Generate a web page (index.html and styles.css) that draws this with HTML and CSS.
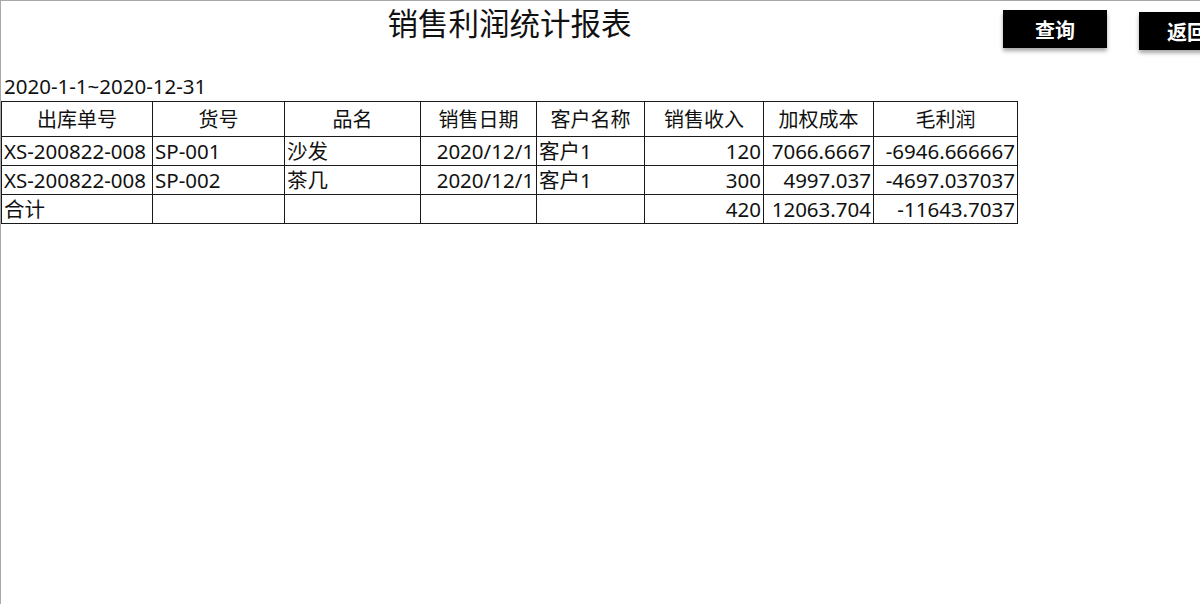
FILE: index.html
```html
<!DOCTYPE html>
<html lang="zh-CN">
<head>
<meta charset="utf-8">
<title>销售利润统计报表</title>
<link rel="stylesheet" href="styles.css">
</head>
<body>
<div class="page">
  <div class="header">
    <h1 class="title">销售利润统计报表</h1>
    <div class="actions">
      <button class="btn">查询</button>
      <button class="btn btn-back">返回</button>
    </div>
  </div>
  <div class="range">2020-1-1~2020-12-31</div>
  <table class="report">
    <colgroup>
      <col class="c1"><col class="c2"><col class="c3"><col class="c4">
      <col class="c5"><col class="c6"><col class="c7"><col class="c8">
    </colgroup>
    <thead>
      <tr>
        <th>出库单号</th><th>货号</th><th>品名</th><th>销售日期</th>
        <th>客户名称</th><th>销售收入</th><th>加权成本</th><th>毛利润</th>
      </tr>
    </thead>
    <tbody>
      <tr>
        <td>XS-200822-008</td><td>SP-001</td><td>沙发</td><td class="r">2020/12/1</td>
        <td>客户1</td><td class="r">120</td><td class="r">7066.6667</td><td class="r">-6946.666667</td>
      </tr>
      <tr>
        <td>XS-200822-008</td><td>SP-002</td><td>茶几</td><td class="r">2020/12/1</td>
        <td>客户1</td><td class="r">300</td><td class="r">4997.037</td><td class="r">-4697.037037</td>
      </tr>
      <tr>
        <td>合计</td><td></td><td></td><td></td>
        <td></td><td class="r">420</td><td class="r">12063.704</td><td class="r">-11643.7037</td>
      </tr>
    </tbody>
  </table>
</div>
</body>
</html>
```

FILE: styles.css
```css
html, body {
  margin: 0;
  padding: 0;
  background: #fff;
}

body {
  font-family: "Noto Sans", "Noto Sans CJK SC", sans-serif;
  color: #111;
}

.page {
  box-sizing: border-box;
  height: 604px;
  border-top: 1px solid #a8a8a8;
  border-left: 1px solid #a8a8a8;
  overflow: hidden;
}

.header {
  display: flex;
  height: 70px;
}

.title {
  flex: 0 0 1002px;
  box-sizing: border-box;
  margin: 0;
  padding: 1px 0 0 15px;
  text-align: center;
  font-family: "Noto Sans CJK SC", sans-serif;
  font-size: 30.5px;
  font-weight: 400;
  line-height: 40px;
  color: #111;
}

.actions {
  display: flex;
  align-items: flex-start;
  gap: 32px;
  padding-top: 9px;
}

.btn {
  width: 104px;
  height: 38px;
  flex: 0 0 auto;
  border: none;
  background: #000;
  color: #fff;
  font-family: "Noto Sans CJK SC", sans-serif;
  font-size: 20px;
  font-weight: 700;
  padding: 0;
  box-shadow: 0 3px 4px rgba(0, 0, 0, 0.35);
}

.btn-back {
  margin-top: 2px;
  text-align: left;
  padding-left: 28px;
}

.range {
  height: 30px;
  box-sizing: border-box;
  padding: 0 0 0 3px;
  font-size: 20.5px;
  line-height: 30px;
}

.report {
  border-collapse: collapse;
  table-layout: fixed;
  width: 1016px;
  font-size: 20.5px;
}

.c1 { width: 151px; }
.c2 { width: 132px; }
.c3 { width: 136px; }
.c4 { width: 116px; }
.c5 { width: 108px; }
.c6 { width: 119px; }
.c7 { width: 110px; }
.c8 { width: 144px; }

.report th,
.report td {
  border: 1px solid #1a1a1a;
  padding: 0 2px;
  white-space: nowrap;
  overflow: hidden;
}

.report th {
  height: 34px;
  font-weight: 400;
  text-align: center;
  font-family: "Noto Sans CJK SC", sans-serif;
  font-size: 20px;
  line-height: 28px;
}

.report td {
  height: 28px;
  text-align: left;
  line-height: 28px;
}

.report td.r {
  text-align: right;
}
```
